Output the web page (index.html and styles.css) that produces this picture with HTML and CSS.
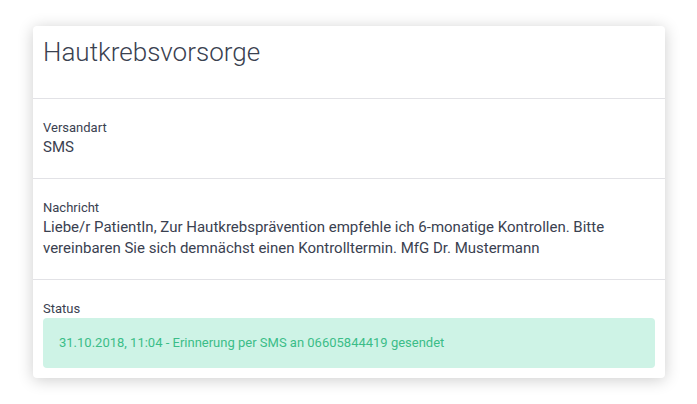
FILE: index.html
```html
<!DOCTYPE html>
<html lang="de">
<head>
<meta charset="utf-8">
<title>Hautkrebsvorsorge</title>
<link rel="stylesheet" href="styles.css">
</head>
<body>
<div class="page">
  <div class="card">
    <div class="card-header">
      <h1 class="title">Hautkrebsvorsorge</h1>
    </div>
    <div class="section">
      <div class="label">Versandart</div>
      <div class="value">SMS</div>
    </div>
    <div class="section">
      <div class="label">Nachricht</div>
      <div class="value">Liebe/r PatientIn, Zur Hautkrebsprävention empfehle ich 6-monatige Kontrollen. Bitte vereinbaren Sie sich demnächst einen Kontrolltermin. MfG Dr. Mustermann</div>
    </div>
    <div class="section section-status">
      <div class="label">Status</div>
      <div class="status-box">31.10.2018, 11:04 - Erinnerung per SMS an 06605844419 gesendet</div>
    </div>
  </div>
</div>
</body>
</html>
```

FILE: styles.css
```css
html, body {
  margin: 0;
  padding: 0;
  background: #ffffff;
}
body {
  font-family: Roboto, "Liberation Sans", Arial, sans-serif;
  color: #3a4150;
}
.page {
  padding: 26px 32px 26px 33px;
}
.card {
  width: 632px;
  background: #ffffff;
  border-radius: 4px;
  box-shadow: 0 2px 16px rgba(0, 0, 0, 0.2);
  display: flex;
  flex-direction: column;
}
.card-header {
  padding: 11px 10px 31px;
  border-bottom: 1px solid #e2e2e6;
}
.title {
  margin: 0;
  font-size: 26px;
  font-weight: 300;
  line-height: 30px;
  color: #3a4150;
}
.section {
  padding: 20px 10px 20px;
  border-bottom: 1px solid #e2e2e6;
}
.label {
  font-size: 13px;
  line-height: 18px;
  color: #3a4150;
}
.value {
  font-size: 15px;
  line-height: 21px;
  color: #3a4150;
}
.section-status {
  border-bottom: none;
  padding-bottom: 10px;
}
.status-box {
  background: #cef3e6;
  color: #3bbd88;
  border-radius: 4px;
  font-size: 13px;
  line-height: 18px;
  padding: 16px 16px;
}
```
